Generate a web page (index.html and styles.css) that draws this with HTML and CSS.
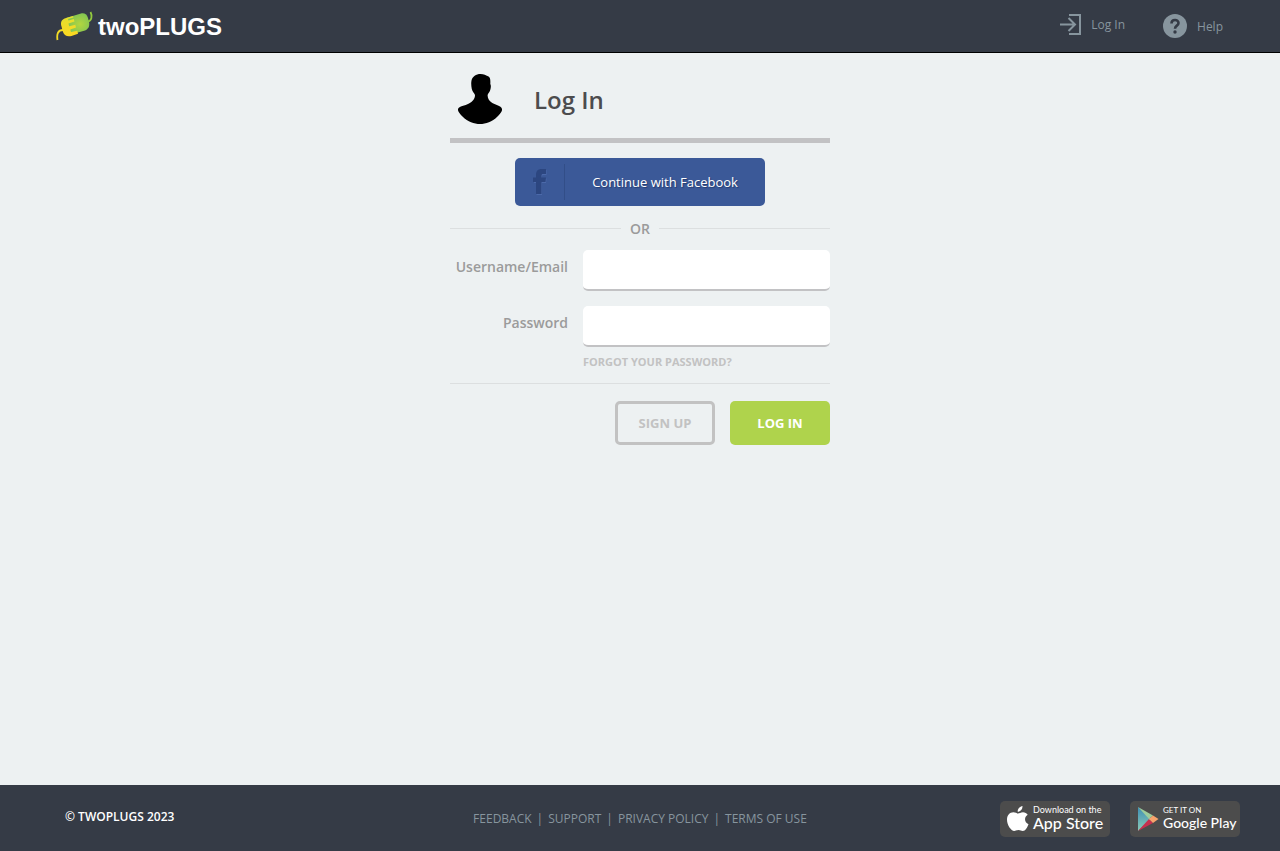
FILE: index.html
```html
<!DOCTYPE html>
<html lang="en">
<head>
<meta charset="utf-8">
<meta name="viewport" content="width=device-width, initial-scale=1">
<title>Log In - twoPLUGS</title>
<link rel="stylesheet" href="styles.css">
</head>
<body>
<header class="site-header">
  <a class="brand" href="#">
    <svg class="brand-mark" width="38" height="30" viewBox="0 0 38 30" aria-hidden="true">
      <defs>
        <radialGradient id="green" cx="0.6" cy="0.5" r="0.5"><stop offset="0" stop-color="#b3d63f"/><stop offset="1" stop-color="#83c552"/></radialGradient>
        <linearGradient id="yellow" x1="0" y1="0" x2="0" y2="1"><stop offset="0" stop-color="#e3e02f"/><stop offset="1" stop-color="#fdd820"/></linearGradient>
      </defs>
      <path d="M31 11C36 10 36.500 5 34.500 1" fill="none" stroke="#93ca3e" stroke-width="1.800"/>
      <path d="M7 19C2 19 .5 23 1.500 29" fill="none" stroke="#f3dc26" stroke-width="1.800"/>
      <path d="M10 7L25 2.500C29 1.800 31 4 32 7L33 11C34 15.500 32 18 29 19.500L13 24Z" fill="url(#green)"/>
      <path d="M17 5L8.500 7.500C5 9 4.500 12 5.500 15.500L7 21C8.500 25 11.500 26 15.500 25L22 22.800L21.300 19.800L15 21L14.300 18.500L20 16.500L19.300 13.800L13.200 15.200L12.500 12.500L18.500 10.500L17.800 8L12.500 9.500L12 8L17.500 6.500Z" fill="url(#yellow)"/>
    </svg>
    <span class="brand-name">twoPLUGS</span>
  </a>
  <nav class="top-nav" aria-label="Account">
    <a class="top-link top-link-login" href="#">
      <svg width="21" height="21" viewBox="0 0 21 21" fill="none" stroke="currentColor" stroke-width="2" aria-hidden="true">
        <path d="M10 2V1H20V20H10V19M0 10.500H15M8.500 4L15 10.500L8.500 17"/>
      </svg>
      <span>Log In</span>
    </a>
    <a class="top-link" href="#">
      <svg width="24" height="24" viewBox="0 0 24 24" aria-hidden="true">
        <circle cx="12" cy="12" r="12" fill="#87959e"/>
        <path d="M8.500 9.500C8.500 5 15.500 5 15.500 9C15.500 11.800 12 11.500 12 14.800" fill="none" stroke="#353b46" stroke-width="2.600"/>
        <circle cx="12" cy="18" r="1.700" fill="#353b46"/>
      </svg>
      <span class="help-label">Help</span>
    </a>
  </nav>
</header>

<main class="page">
  <form class="login" action="#">
    <div class="title">
      <svg width="44" height="50" viewBox="0 0 44 50" aria-hidden="true">
        <path d="M22.500 0C26 0 28 1.500 29.500 2C32.500 3 32.500 6 32.300 10C33 11 33 13 32.500 15C32 18 30 19 29.600 21C29.500 24 31 26.500 33 28C36 30.500 43.500 31.500 44 35C44.500 37 42 40 39.500 42.500C34 48 28 50 22 50C16 50 10 48 4.500 42.500C2 40 -.5 37 0 35C1 32 7 32 11 29.500C14.500 27.500 17 25 17 21C16.500 19 14.500 18 13.800 15C13.200 12 13 9 13.500 6.500C14.500 2.500 18 0 22.500 0Z"/>
      </svg>
      <h1 class="title-text">Log In</h1>
    </div>
    <button class="facebook" type="button">
      <span class="facebook-mark">
        <svg width="14" height="27" viewBox="0 0 14 27" aria-hidden="true">
          <path d="M3.500 26V14H1V9.500H3.500V7C3.500 3 5.500 1 9 1H13.500V6H10.500C9.500 6 9 6.500 9 7.500V9.500H13.500L13 14H9V26Z" fill="#4b69a9"/>
          <path d="M3 25V13H0V8.500H3V6C3 2 5 0 8.500 0H13V5H10C9 5 8.500 5.500 8.500 6.500V8.500H13L12.500 13H8.500V25Z" fill="#2c4680"/>
        </svg>
      </span>
      <span class="facebook-label">Continue with Facebook</span>
    </button>
    <div class="divider"><span>OR</span></div>
    <div class="fields">
      <label class="field-label" for="username">Username/Email</label>
      <input class="field-input" id="username" type="text">
      <label class="field-label" for="password">Password</label>
      <input class="field-input" id="password" type="password">
    </div>
    <div class="forgot-row"><a class="forgot" href="#">FORGOT YOUR PASSWORD?</a></div>
    <div class="actions">
      <button class="button button-outline" type="button">SIGN UP</button>
      <button class="button button-primary" type="submit">LOG IN</button>
    </div>
  </form>
</main>

<footer class="site-footer">
  <p class="copyright">© TWOPLUGS 2023</p>
  <nav class="footer-nav" aria-label="Footer">
    <a href="#">FEEDBACK</a><span>|</span><a href="#">SUPPORT</a><span>|</span><a href="#">PRIVACY POLICY</a><span>|</span><a href="#">TERMS OF USE</a>
  </nav>
  <div class="stores">
    <a class="store" href="#">
      <svg width="22" height="26" viewBox="0 0 22 26" fill="#fff" aria-hidden="true">
        <path d="M15.500 0C15.700 3 13.300 5.800 10.700 5.800C10.400 3 12.900.3 15.500 0Z"/>
        <path d="M11 7.500C12.300 7.500 13.700 6.200 16 6.200C18 6.200 19.700 7.200 20.700 8.700C16.800 11 17.300 16.500 21.500 18.200C20.500 21 18.300 25 15.800 25C14.200 25 13.500 24 11.500 24C9.500 24 8.700 25 7.200 25C4.200 25 0 19 0 13.700C0 9 3 6.300 6.300 6.300C8.500 6.300 9.800 7.500 11 7.500Z"/>
      </svg>
      <span class="store-text"><span class="store-small store-small-apple">Download on the</span><span class="store-name store-name-apple">App Store</span></span>
    </a>
    <a class="store" href="#">
      <svg width="22" height="26" viewBox="0 0 22 26" aria-hidden="true">
        <defs><linearGradient id="play" x1="0" y1="0" x2="0" y2="1"><stop offset="0" stop-color="#3d8fb5"/><stop offset="1" stop-color="#8ccbb5"/></linearGradient></defs>
        <path d="M1 1L14 13L1 25Z" fill="url(#play)"/>
        <path d="M1 1L16 9.500L12 13Z" fill="#9ccc9c"/>
        <path d="M1 25L12 13L16 17Z" fill="#c6304f"/>
        <path d="M16 9.500L21.500 13L16 17L12 13Z" fill="#f7a36c"/>
      </svg>
      <span class="store-text"><span class="store-small">GET IT ON</span><span class="store-name">Google Play</span></span>
    </a>
  </div>
</footer>
</body>
</html>
```
FILE: styles.css
```css
* { box-sizing: border-box; }
body {
  margin: 0;
  min-height: 100vh;
  display: flex;
  flex-direction: column;
  background: #edf1f2;
  font-family: "Open Sans", "Noto Sans", sans-serif;
  font-size: 14px;
}
a { color: inherit; text-decoration: none; }
button { font-family: inherit; cursor: pointer; }

.site-header {
  display: flex;
  justify-content: space-between;
  align-items: center;
  min-height: 53px;
  padding: 0 57px 0 56px;
  background: #353b46;
  border-bottom: 1px solid #000;
}
.brand { display: flex; align-items: center; gap: 4px; color: #fff; }
.brand-name {
  padding-top: 2px;
  font: bold 24px/28px "Liberation Sans", Arial, sans-serif;
}
.top-nav { display: flex; align-items: center; gap: 38px; color: #87959e; font-size: 12px; line-height: 16px; }
.top-link { display: flex; align-items: center; gap: 10px; }
.top-link-login { padding-bottom: 3px; }
.help-label { padding-top: 2px; }

.page { flex: 1; padding: 21px 20px; }
.login { display: flex; flex-direction: column; max-width: 380px; margin: 0 auto; }
.title {
  display: flex;
  align-items: center;
  gap: 32px;
  padding: 0 8px 14px;
  border-bottom: 5px solid #c2c2c4;
}
.title-text { margin: 0; padding-top: 2px; font-size: 24px; line-height: 32px; font-weight: 600; color: #4c4c4e; }

.facebook {
  display: flex;
  align-items: center;
  align-self: center;
  width: 250px;
  height: 48px;
  margin-top: 15px;
  padding: 0;
  border: 0;
  border-radius: 5px;
  background: #3b5998;
  color: #fff;
  font-size: 13px;
}
.facebook-mark {
  display: flex;
  align-items: center;
  justify-content: center;
  width: 50px;
  height: 36px;
  border-right: 1px solid #324e88;
}
.facebook-label { flex: 1; text-shadow: 1px 1px 1px #243c70; }

.divider {
  display: flex;
  align-items: center;
  gap: 9px;
  margin: 12px 0 11px;
  color: #9b9b9b;
  font-weight: 600;
  line-height: 20px;
}
.divider span { padding-top: 1px; }
.divider::before, .divider::after { content: ""; flex: 1; height: 1px; background: #dcdfe0; }

.fields { display: grid; grid-template-columns: 118px 1fr; gap: 15px; }
.field-label { padding-top: 7px; text-align: right; line-height: 20px; font-weight: 600; color: #9b9b9b; }
.field-input {
  width: 100%;
  height: 41px;
  padding: 0 10px;
  border: 0;
  border-bottom: 2px solid #c2c2c4;
  border-radius: 5px;
  background: #fff;
  font: inherit;
}
.forgot-row {
  padding: 7px 0 13px 133px;
  border-bottom: 1px solid #dcdfe0;
  line-height: 16px;
}
.forgot { display: block; font-size: 11px; font-weight: 700; color: #c2c2c2; }
.actions { display: flex; justify-content: flex-end; gap: 15px; margin-top: 17px; }
.button { width: 100px; height: 44px; padding: 0; border: 0; border-radius: 5px; font-size: 13px; font-weight: 700; }
.button-outline { border: 3px solid #c2c2c2; background: transparent; color: #c2c2c2; }
.button-primary { background: #afd34c; color: #fff; }

.site-footer {
  display: grid;
  grid-template-columns: 1fr auto 1fr;
  align-items: center;
  min-height: 66px;
  padding: 2px 40px 0;
  background: #353b46;
  font-size: 12px;
  line-height: 16px;
}
.copyright { margin: 0 0 4px 25px; color: #fff; font-weight: 600; }
.footer-nav { display: flex; gap: 5px; color: #87959e; }
.stores { display: flex; justify-content: flex-end; gap: 20px; }
.store {
  display: flex;
  align-items: center;
  gap: 4px;
  width: 110px;
  height: 36px;
  padding-left: 7px;
  border-radius: 5px;
  background: #4c4c4c;
  color: #fff;
  white-space: nowrap;
}
.store-text { display: flex; flex-direction: column; padding-bottom: 2px; }
.store-small { font: 8px/10px Lato, sans-serif; }
.store-small-apple { font-size: 9px; }
.store-name { font: 500 14px/16px Lato, sans-serif; }
.store-name-apple { font-size: 16px; }
```
